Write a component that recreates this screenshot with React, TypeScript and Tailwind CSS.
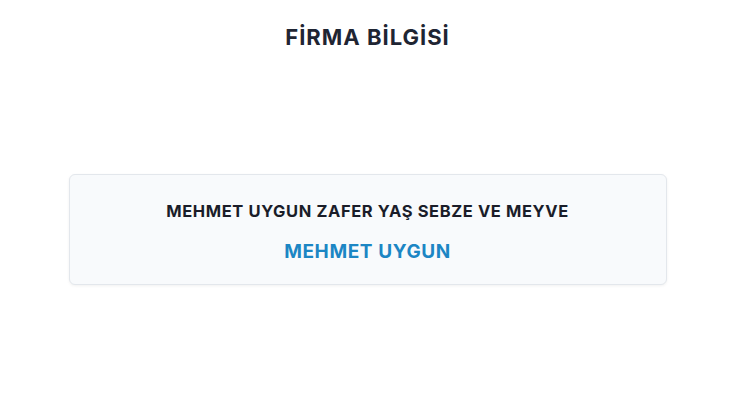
import React from "react";

const App = () => {
  return (
    <div className="w-[735px] h-[420px] bg-white font-['Inter',sans-serif] flex flex-col items-center">
      <h1 className="mt-[22px] text-[22px] leading-[30px] font-bold text-[#1f2533] tracking-[1px]">
        FİRMA BİLGİSİ
      </h1>
      <div className="mt-[122px] w-[598px] h-[111px] bg-[#f8fafc] border border-[#e3e7ec] rounded-md shadow-[0_1px_3px_rgba(0,0,0,0.06)] flex flex-col items-center pt-[24px]">
        <div className="text-[16.5px] leading-[24px] font-bold text-[#1a1d29] tracking-[0.6px]">
          MEHMET UYGUN ZAFER YAŞ SEBZE VE MEYVE
        </div>
        <div className="mt-[16px] text-[19px] leading-[26px] font-bold text-[#1c86c4] tracking-[0.6px]">
          MEHMET UYGUN
        </div>
      </div>
    </div>
  );
};

export default App;
